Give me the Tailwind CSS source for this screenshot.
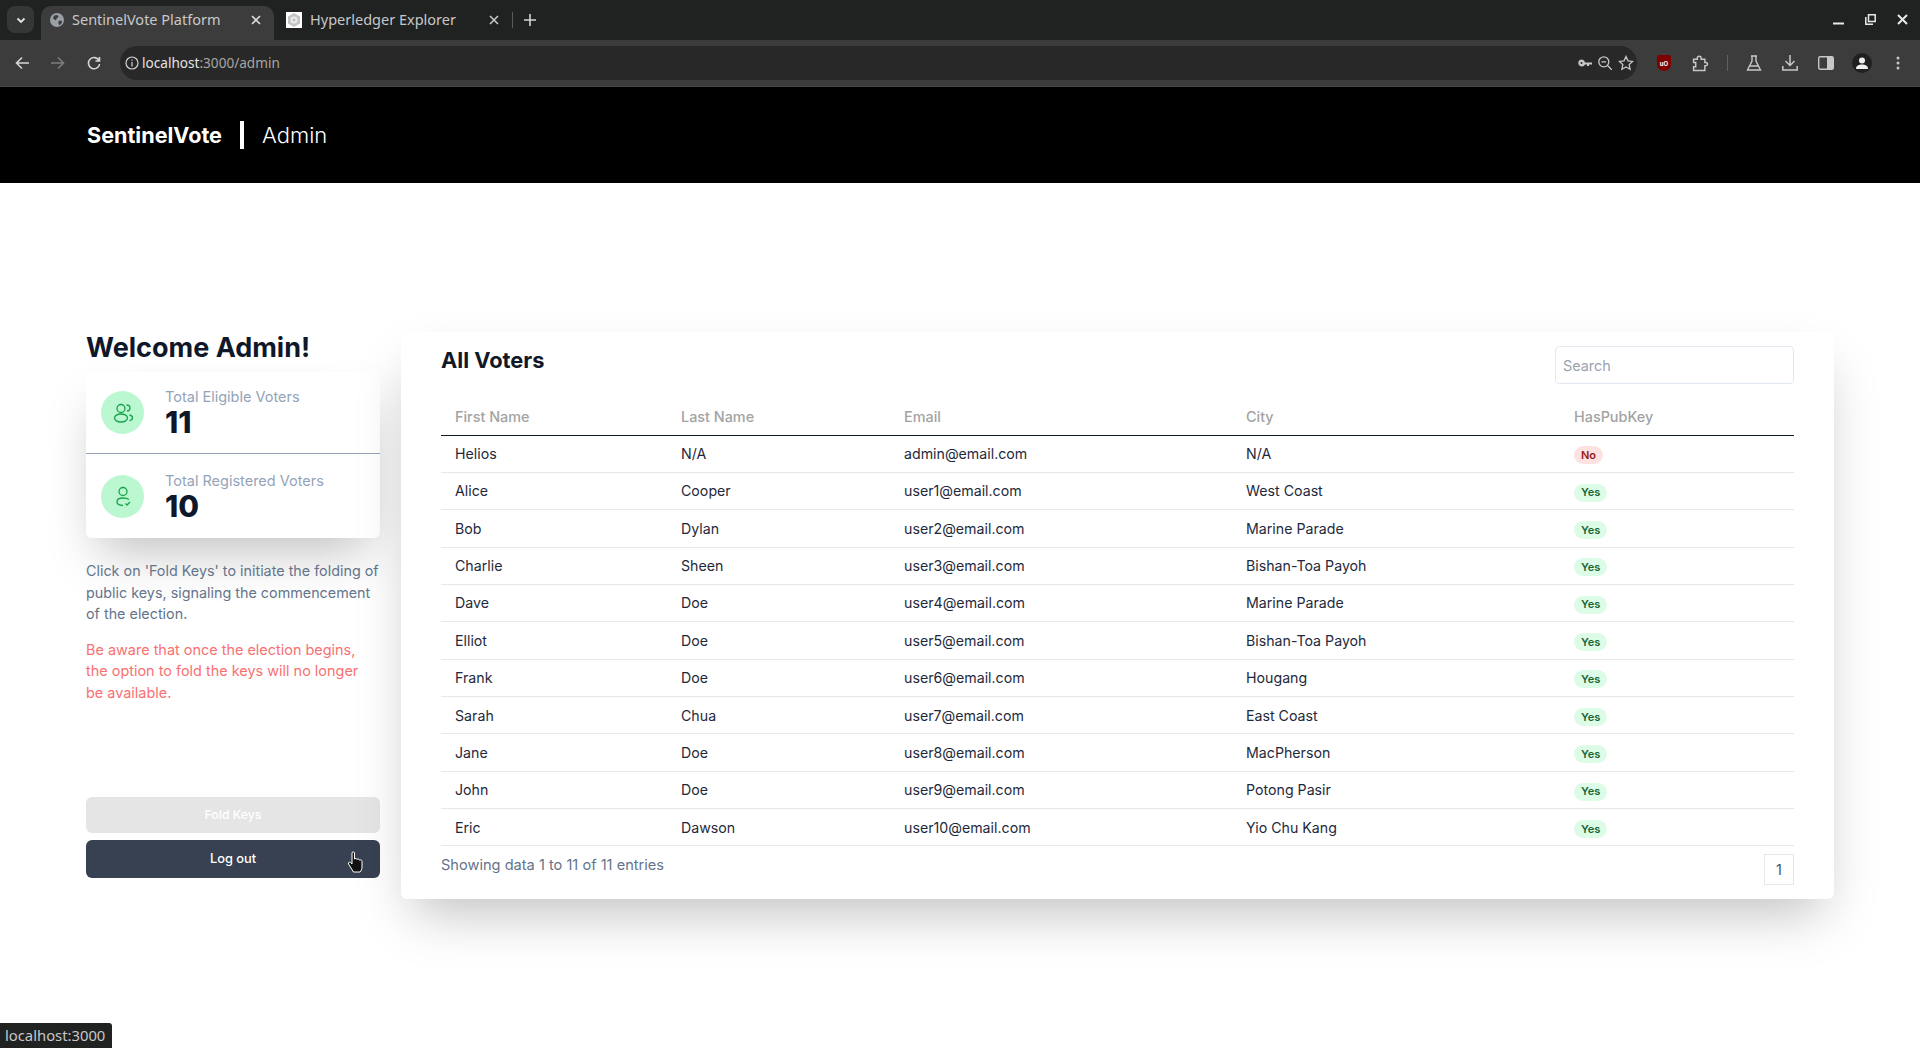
<!DOCTYPE html>
<html lang="en">
<head>
    <meta charset="UTF-8">
    <meta name="viewport" content="width=device-width, initial-scale=1.0">
    <title>SentinelVote Platform</title>
    <script src="https://cdn.jsdelivr.net/npm/@tailwindcss/browser@4"></script>
</head>
<body class="bg-white h-[1048px] overflow-hidden relative font-['Inter',sans-serif]">
    <!-- browser tab strip -->
    <div class="h-[40px] bg-[#202222] flex items-end text-[#c7c7c7] font-['Noto_Sans',sans-serif] text-[14.500px]">
        <div class="w-[27px] h-[27px] ml-[7px] mb-[7px] rounded-lg bg-[#353636] flex items-center justify-center">
            <svg class="w-3 h-3" viewBox="0 0 12 12" fill="none" stroke="#e3e3e3" stroke-width="1.8"><path d="M2.5 4.5 6 8l3.500-3.500"/></svg>
        </div>
        <div class="w-[233px] h-[34px] ml-[7px] rounded-t-[10px] bg-[#3c3c3c] flex items-center pl-[8px] pr-[13px] pb-[6px] text-[#c9c9c9]">
            <svg class="w-[16px] h-[16px] shrink-0" viewBox="0 0 16 16"><circle cx="8" cy="8" r="7" fill="#9aa0a6"/><path d="M5 3.500 8.500 3l1 2-2 1.500-.5 2-3-2zM9.500 9l3-.5.5 2-2.500 3-1-2z" fill="#3c3c3c"/></svg>
            <span class="ml-[7px] whitespace-nowrap">SentinelVote Platform</span>
            <svg class="ml-auto w-[10px] h-[10px]" viewBox="0 0 10 10" stroke="#dcdcdc" stroke-width="1.6"><path d="M1 1l8 8M9 1 1 9"/></svg>
        </div>
        <div class="w-[238px] h-[34px] flex items-center pl-[12px] pr-[13px] pb-[6px]">
            <div class="w-[16px] h-[16px] bg-white shrink-0 flex items-center justify-center">
                <svg class="w-[14px] h-[14px]" viewBox="0 0 14 14" fill="#c4c4c4"><path d="M7 0l6 3.500v7L7 14l-6-3.500v-7z"/><circle cx="7" cy="7" r="3.500" fill="#ececec"/><circle cx="7" cy="7" r="1.500" fill="#bdbdbd"/></svg>
            </div>
            <span class="ml-[8px] whitespace-nowrap">Hyperledger Explorer</span>
            <svg class="ml-auto w-[10px] h-[10px]" viewBox="0 0 10 10" stroke="#c7c7c7" stroke-width="1.6"><path d="M1 1l8 8M9 1 1 9"/></svg>
        </div>
        <div class="w-px h-[16px] bg-[#5a5a5a] mb-[12px]"></div>
        <svg class="w-[12px] h-[12px] ml-[11px] mb-[14px]" viewBox="0 0 12 12" stroke="#d5d5d5" stroke-width="1.600"><path d="M6 0v12M0 6h12"/></svg>
        <div class="ml-auto flex items-center gap-[21px] mb-[15px] mr-[12px]">
            <svg class="w-[11px] h-[11px]" viewBox="0 0 11 11" fill="#e8e8e8"><path d="M0 8.500h11v2H0z"/></svg>
            <svg class="w-[11px] h-[11px]" viewBox="0 0 11 11" fill="none" stroke="#e8e8e8" stroke-width="1.500"><path d="M3.500.8h6.700v6.700H3.500zM.8 3v7.200H8"/></svg>
            <svg class="w-[11px] h-[11px]" viewBox="0 0 11 11" stroke="#e8e8e8" stroke-width="2"><path d="M1 1l9 9M10 1 1 10"/></svg>
        </div>
    </div>

    <!-- browser toolbar -->
    <div class="h-[47px] bg-[#3c3c3c] border-b border-[#4a4a4a] flex items-center">
        <svg class="w-[14px] h-[14px] ml-[15px]" viewBox="0 0 14 14" fill="none" stroke="#d6d6d6" stroke-width="1.600"><path d="M14 7H1.500M7 1.500 1.500 7 7 12.500"/></svg>
        <svg class="w-[14px] h-[14px] ml-[22px]" viewBox="0 0 14 14" fill="none" stroke="#7d7d7d" stroke-width="1.600"><path d="M0 7h12.500M7 1.500 12.500 7 7 12.500"/></svg>
        <svg class="w-[14px] h-[14px] ml-[22px]" viewBox="0 0 14 14" fill="none" stroke="#d6d6d6" stroke-width="1.600"><path d="M12 4.500A5.600 5.600 0 1 0 12.600 8M12.500 1v4h-4"/></svg>
        <div class="w-[1517px] h-[34px] ml-[19px] rounded-full bg-[#282828] flex items-center pl-[5px] pr-[3px] font-['Noto_Sans',sans-serif] text-[13.600px]">
            <svg class="w-[14px] h-[14px] shrink-0" viewBox="0 0 14 14" fill="none" stroke="#d6d6d6" stroke-width="1.200"><circle cx="7" cy="7" r="6"/><path d="M7 6v4.500M7 3.500v1.300"/></svg>
            <span class="ml-[3px] text-[#e3e3e3]">localhost<span class="text-[#a6a6a6]">:3000/admin</span></span>
            <div class="ml-auto flex items-center gap-[6px]">
                <svg class="w-[14px] h-[14px]" viewBox="0 0 14 14" fill="#c7c7c7"><path d="M4 3.500a3.500 3.500 0 1 0 3 5h2v1.500h2V8.500h3v-2H7a3.500 3.500 0 0 0-3-3zM3.500 6a1 1 0 1 1 0 2 1 1 0 0 1 0-2z"/></svg>
                <svg class="w-[14px] h-[14px]" viewBox="0 0 14 14" fill="none" stroke="#c7c7c7" stroke-width="1.300"><circle cx="5.800" cy="5.800" r="5"/><path d="M9.500 9.500 14 14M3.500 5.800h4.600"/></svg>
                <svg class="w-[16px] h-[16px]" viewBox="0 0 16 16" fill="none" stroke="#c7c7c7" stroke-width="1.300"><path d="M8 1.500l2 4.300 4.700.6-3.500 3.200.9 4.700L8 12l-4.100 2.300.9-4.700L1.300 6.400 6 5.800z"/></svg>
            </div>
        </div>
        <div class="w-[14px] h-[16px] ml-[20px] bg-[#800000] rounded-b-[7px] rounded-t-[2px] flex items-center justify-center text-[6px] font-bold text-white">uO</div>
        <svg class="w-[17px] h-[17px] ml-[21px]" viewBox="0 0 16 16" fill="none" stroke="#c7c7c7" stroke-width="1.400"><path d="M1.500 4h3.500V3a1.800 1.800 0 0 1 3.600 0v1h3.500v3h1a1.500 1.500 0 0 1 0 3h-1v4.500h-10.600V11h2V7h-2z"/></svg>
        <div class="w-px h-[16px] ml-[18px] bg-[#5f5f5f]"></div>
        <svg class="w-[16px] h-[16px] ml-[18px]" viewBox="0 0 16 16" fill="none" stroke="#c7c7c7" stroke-width="1.400"><path d="M5 1h6M6 1v5L1.500 15h13L10 6V1M4 11h8"/></svg>
        <svg class="w-[16px] h-[16px] ml-[20px]" viewBox="0 0 16 16" fill="none" stroke="#c7c7c7" stroke-width="1.500"><path d="M8 0v10M3.500 6 8 10.500 12.500 6M.8 11v4h14.400v-4"/></svg>
        <svg class="w-[16px] h-[16px] ml-[20px]" viewBox="0 0 16 16"><rect x=".7" y="1.700" width="14.600" height="12.600" rx="1.500" fill="none" stroke="#c7c7c7" stroke-width="1.400"/><path d="M9 2h6v12H9z" fill="#c7c7c7"/></svg>
        <div class="w-[20px] h-[20px] ml-[18px] rounded-full bg-[#202020] flex items-center justify-center">
            <svg class="w-[14px] h-[14px]" viewBox="0 0 14 14" fill="#f0f0f0"><circle cx="7" cy="4.500" r="3"/><path d="M1 13c0-3.500 3-4.500 6-4.500s6 1 6 4.500z"/></svg>
        </div>
        <svg class="w-[4px] h-[14px] ml-[24px]" viewBox="0 0 4 14" fill="#c7c7c7"><circle cx="2" cy="2" r="1.500"/><circle cx="2" cy="7" r="1.500"/><circle cx="2" cy="12" r="1.500"/></svg>
    </div>

    <!-- app header -->
    <header class="h-[96px] bg-black flex items-center pl-[87px] text-white">
        <span class="text-[21.600px] font-bold">SentinelVote</span>
        <span class="w-[4px] h-[28px] bg-white ml-[18px]"></span>
        <span class="text-[22px] font-light ml-[18px]">Admin</span>
    </header>

    <main class="flex px-[86px] pt-[149px] gap-[21px]">
        <!-- left column -->
        <section class="w-[294px] shrink-0 flex flex-col">
            <h1 class="text-[27px] leading-[34px] font-bold text-[#0f172a] mt-[-1px] mb-[7px]">Welcome Admin!</h1>
            <div class="rounded-md bg-white shadow-2xl">
                <div class="h-[82px] flex items-center pl-[15px] border-b border-[#94a3b8]">
                    <div class="w-[43px] h-[43px] rounded-full bg-[#bbf7d0] flex items-center justify-center">
                        <svg class="w-[24px] h-[24px]" viewBox="0 0 24 24" fill="none" stroke="#16a34a" stroke-width="1.300"><circle cx="10" cy="7.500" r="4"/><ellipse cx="10" cy="17" rx="6.500" ry="4"/><path d="M15.500 4c2.500 0 3.500 1.500 3.500 3s-1 3-3 3M18.500 14c2 .5 3 1.500 3 2.800s-1 2.400-3 2.800"/></svg>
                    </div>
                    <div class="ml-[21px] pt-[2px]">
                        <p class="text-[14.500px] leading-[18px] text-[#94a3b8]">Total Eligible Voters</p>
                        <p class="text-[30px] leading-[33px] font-extrabold text-[#0f172a]">11</p>
                    </div>
                </div>
                <div class="h-[84px] flex items-center pl-[15px]">
                    <div class="w-[43px] h-[43px] rounded-full bg-[#bbf7d0] flex items-center justify-center">
                        <svg class="w-[24px] h-[24px]" viewBox="0 0 24 24" fill="none" stroke="#16a34a" stroke-width="1.300"><circle cx="12" cy="7.500" r="4"/><path d="M18 15.500c-1.500-1-3.500-1.500-6-1.500-3.500 0-6 1.500-6 3.800s2.500 3.700 6 3.700M14.500 19.500l1.500 1.500 3-3"/></svg>
                    </div>
                    <div class="ml-[21px] pt-[2px]">
                        <p class="text-[14.500px] leading-[18px] text-[#94a3b8]">Total Registered Voters</p>
                        <p class="text-[30px] leading-[33px] font-extrabold text-[#0f172a]">10</p>
                    </div>
                </div>
            </div>
            <p class="mt-[22px] text-[14.350px] leading-[21.500px] text-[#64748b]">Click on 'Fold Keys' to initiate the folding of public keys, signaling the commencement of the election.</p>
            <p class="mt-[14px] pr-[16px] text-[14.450px] leading-[21.500px] text-[#f87171]">Be aware that once the election begins, the option to fold the keys will no longer be available.</p>
            <button class="mt-[94px] h-[36px] rounded-md bg-[#e5e5e5] text-white text-[12.300px] font-medium">Fold Keys</button>
            <button class="mt-[7px] h-[38px] rounded-md bg-[#374151] text-white text-[12.800px] font-medium">Log out</button>
        </section>

        <!-- voters table -->
        <section class="w-[1433px] h-[567px] rounded-md bg-white shadow-2xl px-[40px] pt-[14px]">
            <div class="flex justify-between h-[38px]">
                <h2 class="text-[21.800px] leading-[28px] font-bold text-[#111827]">All Voters</h2>
                <input placeholder="Search" class="w-[239px] h-[38px] border border-[#e2e8f0] rounded-[4px] px-[7px] text-[14.400px] placeholder:text-[#9ca3af]">
            </div>
            <table class="w-full table-fixed mt-[15px] text-[14.200px] text-[#1e293b]">
                <colgroup>
                    <col class="w-[226px]"><col class="w-[223px]"><col class="w-[342px]"><col class="w-[328px]"><col>
                </colgroup>
                <thead>
                    <tr class="h-[36px] border-b border-[#111827] text-left text-[14.400px] text-[#a3a3a3]">
                        <th class="pl-[14px] font-medium">First Name</th>
                        <th class="pl-[14px] font-medium">Last Name</th>
                        <th class="pl-[14px] font-medium">Email</th>
                        <th class="pl-[14px] font-medium">City</th>
                        <th class="pl-[14px] font-medium">HasPubKey</th>
                    </tr>
                </thead>
                <tbody id="rows"></tbody>
            </table>
            <div class="flex justify-between items-start mt-[8px]">
                <p class="text-[14.600px] leading-[20px] mt-px text-[#64748b]">Showing data 1 to 11 of 11 entries</p>
                <div class="w-[30px] h-[31px] border border-[#e5e7eb] flex items-center justify-center text-[14.400px] text-[#475569]">1</div>
            </div>
        </section>
    </main>

    <!-- pointer over the log out button -->
    <svg class="absolute left-[347px] top-[851px] w-[20px] h-[22px]" viewBox="0 0 20 22"><path d="M5 2c0-1.500 2.500-1.500 2.500 0v6c1-1 2.500-.5 2.500.5.500-1 2.500-.5 2.500.7.700-.7 2.500-.3 2.500 1V16c0 2-1 4-2 5H6.500L1.500 13c-.7-1.500 1-2.500 2-1.500L5 13z" fill="#111" stroke="#fff" stroke-width="1"/></svg>

    <!-- status bubble -->
    <div class="absolute left-0 bottom-0 h-[25px] w-[112px] bg-[#202222] rounded-tr-[3px] pl-[5px] font-['Noto_Sans',sans-serif] text-[14.800px] leading-[25px] text-[#c7c7c7]">localhost:3000</div>

    <script>
        const voters = [
            ['Helios', 'N/A', 'admin@email.com', 'N/A', false],
            ['Alice', 'Cooper', 'user1@email.com', 'West Coast', true],
            ['Bob', 'Dylan', 'user2@email.com', 'Marine Parade', true],
            ['Charlie', 'Sheen', 'user3@email.com', 'Bishan-Toa Payoh', true],
            ['Dave', 'Doe', 'user4@email.com', 'Marine Parade', true],
            ['Elliot', 'Doe', 'user5@email.com', 'Bishan-Toa Payoh', true],
            ['Frank', 'Doe', 'user6@email.com', 'Hougang', true],
            ['Sarah', 'Chua', 'user7@email.com', 'East Coast', true],
            ['Jane', 'Doe', 'user8@email.com', 'MacPherson', true],
            ['John', 'Doe', 'user9@email.com', 'Potong Pasir', true],
            ['Eric', 'Dawson', 'user10@email.com', 'Yio Chu Kang', true]
        ];

        document.getElementById('rows').innerHTML = voters.map(v => `
            <tr class="h-[37.36px] border-b border-[#e5e7eb]">
                <td class="pl-[14px]">${v[0]}</td>
                <td class="pl-[14px]">${v[1]}</td>
                <td class="pl-[14px]">${v[2]}</td>
                <td class="pl-[14px]">${v[3]}</td>
                <td class="pl-[14px]">
                    ${v[4]
                        ? '<span class="inline-flex items-center h-[18px] mt-[2px] px-[7px] rounded-full bg-[#dcfce7] text-[#166534] text-[11px] font-semibold">Yes</span>'
                        : '<span class="inline-flex items-center h-[18px] mt-[2px] px-[7px] rounded-full bg-[#fee2e2] text-[#991b1b] text-[11px] font-semibold">No</span>'}
                </td>
            </tr>`).join('');
    </script>
</body>
</html>
